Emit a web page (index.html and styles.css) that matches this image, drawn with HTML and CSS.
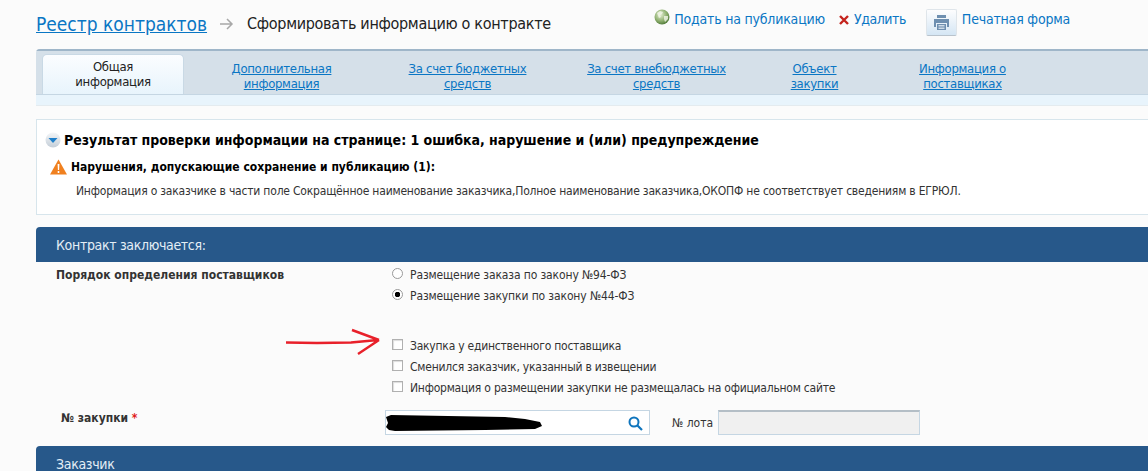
FILE: index.html
```html
<!DOCTYPE html>
<html lang="ru">
<head>
<meta charset="utf-8">
<title>Реестр контрактов</title>
<link rel="stylesheet" href="styles.css">
</head>
<body>
<div class="page">
  <header class="top">
    <div class="crumbs">
      <a class="crumb-link" href="#">Реестр контрактов</a>
      <svg class="crumb-arrow" width="14" height="12" viewBox="0 0 14 12"><path d="M0 6h12M7 1l5 5-5 5" fill="none" stroke="#a8a8a8" stroke-width="1.5"/></svg>
      <span class="crumb-current">Сформировать информацию о контракте</span>
    </div>
    <div class="actions">
      <a class="action action-pub" href="#">
        <svg class="globe" width="16" height="16" viewBox="0 0 16 16"><defs><radialGradient id="g" cx=".4" cy=".35" r=".75"><stop offset="0" stop-color="#e4eed2"/><stop offset=".55" stop-color="#8fb070"/><stop offset="1" stop-color="#3f6b2a"/></radialGradient></defs><circle cx="8" cy="8" r="7.5" fill="url(#g)"/><path d="M3 4l3-2 3 1-1 2-2 1 1 2-2 1zM10 7l4 0 0 3-3 3-1-3z" fill="#f2f6e8" opacity=".8"/></svg>
        Подать на публикацию</a>
      <a class="action action-del" href="#">
        <svg width="10" height="10" viewBox="0 0 10 10"><path d="M1 1l8 8M9 1l-8 8" stroke="#c4231c" stroke-width="2.4"/></svg>
        Удалить</a>
      <a class="action action-print" href="#">
        <span class="print-btn">
          <svg width="17" height="17" viewBox="0 0 17 17"><path d="M4 1h9v3H4z" fill="#6e8fb0"/><path d="M1 5h15v8h-2V9H3v4H1z" fill="#6e8fb0"/><path d="M4 10h9v6H4z" fill="#6e8fb0"/><path d="M5.500 11.500h6M5.500 13h6M5.500 14.500h6" stroke="#e6eef5" stroke-width=".8"/></svg>
        </span>
        Печатная форма</a>
    </div>
  </header>

  <nav class="tabs">
    <div class="tab-row">
      <div class="tab tab-active">Общая<br>информация</div>
      <a class="tab tab-2" href="#">Дополнительная<br>информация</a>
      <a class="tab tab-3" href="#">За счет бюджетных<br>средств</a>
      <a class="tab tab-4" href="#">За счет внебюджетных<br>средств</a>
      <a class="tab tab-5" href="#">Объект<br>закупки</a>
      <a class="tab tab-6" href="#">Информация о<br>поставщиках</a>
    </div>
    <div class="tab-strip"></div>
  </nav>

  <section class="check">
    <h2 class="check-title">
      <svg width="16" height="16" viewBox="0 0 16 16"><defs><linearGradient id="b" x1="0" y1="0" x2="0" y2="1"><stop offset="0" stop-color="#f4f6f8"/><stop offset="1" stop-color="#c4ced8"/></linearGradient></defs><circle cx="8" cy="8" r="7.500" fill="url(#b)"/><path d="M3.500 6h9L8 11z" fill="#1f7fc9"/></svg>
      Результат проверки информации на странице: 1 ошибка, нарушение и (или) предупреждение
    </h2>
    <h3 class="check-sub">
      <svg width="17" height="16" viewBox="0 0 17 16"><path d="M8.500 0.500L17 15.500H0z" fill="#f0801f"/><path d="M7.600 5h1.800l-.3 6H7.900zM7.700 12h1.600v2H7.700z" fill="#fff"/></svg>
      Нарушения, допускающие сохранение и публикацию (1):
    </h3>
    <p class="check-text">Информация о заказчике в части поле Сокращённое наименование заказчика,Полное наименование заказчика,ОКОПФ не соответствует сведениям в ЕГРЮЛ.</p>
  </section>

  <h2 class="section-head">Контракт заключается:</h2>

  <div class="form">
    <svg class="red-arrow" width="96" height="28" viewBox="0 0 96 28"><path d="M1 14.500L32 15l34-.5L93 12M67 2l27 10M73 26l21-14" fill="none" stroke="#e8202a" stroke-width="2.400"/></svg>
    <div class="form-row">
      <div class="field-label">Порядок определения поставщиков</div>
      <div class="options">
        <label class="opt"><span class="radio"></span>Размещение заказа по закону №94-ФЗ</label>
        <label class="opt"><span class="radio radio-on"></span>Размещение закупки по закону №44-ФЗ</label>
      </div>
    </div>
    <div class="checks">
      <label class="opt"><span class="box"></span>Закупка у единственного поставщика</label>
      <label class="opt"><span class="box"></span>Сменился заказчик, указанный в извещении</label>
      <label class="opt"><span class="box"></span>Информация о размещении закупки не размещалась на официальном сайте</label>
    </div>
    <div class="number-row">
      <div class="number-label">№ закупки <span class="req">*</span></div>
      <div class="search">
        <svg class="blot" width="158" height="18" viewBox="0 0 158 18"><path d="M1 3L6 1 120 3 140 5 155 8 157 12 150 15 100 16 10 17 4 16 1 13 3 9z" fill="#000"/></svg>
        <svg class="loupe" width="15" height="15" viewBox="0 0 15 15"><circle cx="6" cy="6" r="4.500" fill="none" stroke="#0f75bd" stroke-width="2"/><path d="M9.500 9.500L14 14" stroke="#0f75bd" stroke-width="2.200"/></svg>
      </div>
      <span class="lot-label">№ лота</span>
      <div class="lot-input"></div>
    </div>
  </div>

  <h2 class="section-head section-head-last">Заказчик</h2>
</div>
</body>
</html>
```
FILE: styles.css
```css
html, body {
  margin: 0;
  height: 471px;
  overflow: hidden;
  background: #fbfbfb;
}
body {
  font-family: "DejaVu Sans", sans-serif;
  font-stretch: condensed;
  color: #333;
}
a { color: #0a76c4; }
.page { margin-left: 36px; }

.top {
  display: flex;
  justify-content: space-between;
  height: 49px;
}
.crumbs { display: flex; align-items: center; height: 47px; }
.crumb-link { font-size: 19px; line-height: 24px; }
.crumb-arrow { margin: 0 13px; }
.crumb-current { font-size: 16px; letter-spacing: -.3px; color: #222; }
.actions {
  display: flex;
  align-items: flex-start;
  margin-right: 78px;
  padding-top: 9px;
  font-size: 14px;
  letter-spacing: -.2px;
}
.action { display: flex; align-items: flex-start; text-decoration: none; line-height: 20px; }
.action-pub .globe { margin-right: 4px; }
.action-del { margin-left: 14px; letter-spacing: -.45px; }
.action-del svg { margin: 6px 5px 0 0; }
.action-print { margin-left: 20px; }
.print-btn {
  display: flex;
  align-items: center;
  justify-content: center;
  width: 31px;
  height: 27px;
  margin-right: 5px;
  border: 1px solid #dfe5ea;
  border-bottom-color: #b9c3cc;
  border-radius: 2px;
  background: linear-gradient(#fdfdfe, #d5e6f4);
  box-sizing: border-box;
}

.tabs { border-radius: 4px 0 0 0; overflow: hidden; }
.tab-row {
  display: flex;
  height: 46px;
  box-sizing: border-box;
  padding: 5px 0 0 6px;
  background: #d5e0e9;
  border-top: 2px solid #9fb6c9;
  border-bottom: 1px solid #c5d6e3;
}
.tab {
  font-size: 13px;
  letter-spacing: -.3px;
  line-height: 15px;
  text-align: center;
  padding-top: 5px;
  flex: none;
}
.tab-active {
  width: 142px;
  box-sizing: border-box;
  background: linear-gradient(#fbfdff, #e8f4fc);
  border: 1px solid #c9d9e5;
  border-bottom: 0;
  border-radius: 5px 5px 0 0;
  color: #222;
  margin-top: -2px;
  padding-top: 4px;
}
.tab-2 { width: 195px; }
.tab-3 { width: 177px; }
.tab-4 { width: 201px; }
.tab-5 { width: 115px; }
.tab-6 { width: 181px; }
.tab-strip {
  height: 10px;
  background: #e8f4fc;
  border-bottom: 1px solid #e4ebef;
}

.check {
  margin-top: 13px;
  height: 96px;
  box-sizing: border-box;
  background: #fff;
  border: 1px solid #d7e5ec;
  border-right: 0;
  padding-top: 11px;
}
.check-title {
  display: flex;
  align-items: center;
  gap: 3px;
  margin: 0 0 0 8px;
  font-size: 14px;
  letter-spacing: -.04px;
  line-height: 18px;
  color: #000;
}
.check-sub {
  display: flex;
  align-items: center;
  gap: 4px;
  margin: 9px 0 0 13px;
  font-size: 12px;
  line-height: 18px;
  color: #000;
}
.check-text {
  margin: 7px 0 0 39px;
  font-size: 12px;
  letter-spacing: -.2px;
  line-height: 16px;
  color: #333;
}

.section-head {
  margin: 12px 0 0;
  height: 35px;
  box-sizing: border-box;
  padding: 9px 0 0 20px;
  font-size: 14px;
  letter-spacing: -.33px;
  line-height: 18px;
  font-weight: normal;
  color: #e4eef6;
  background: #27588a;
  border-radius: 4px 0 0 0;
}
.section-head-last { margin-top: 0; height: 25px; }

.form { position: relative; height: 184px; box-sizing: border-box; padding-top: 5px; }
.red-arrow { position: absolute; left: 249px; top: 66px; }
.form-row { display: flex; }
.field-label {
  width: 337px;
  padding-left: 20px;
  box-sizing: border-box;
  font-size: 12px;
  font-weight: bold;
  line-height: 16px;
}
.options { display: flex; flex-direction: column; gap: 5px; padding-left: 20px; letter-spacing: -.12px; }
.opt {
  display: flex;
  align-items: center;
  font-size: 12px;
  line-height: 16px;
  color: #333;
  height: 16px;
}
.radio, .box {
  flex: none;
  width: 11px;
  height: 11px;
  margin-right: 7px;
  margin-left: -1px;
  box-sizing: border-box;
  background: #fff;
  margin-top: -3px;
}
.radio {
  border-radius: 50%;
  border: 1px solid #9a9a9a;
}
.radio-on { background: radial-gradient(circle, #000 0 2.500px, #fff 3px); }
.box { border: 1px solid #b0b0b0; box-shadow: inset 1px 1px 1px #ddd; }
.checks {
  display: flex;
  flex-direction: column;
  gap: 5px;
  margin: 34px 0 0 357px;
  letter-spacing: -.23px;
}
.number-row { display: flex; align-items: flex-start; margin-top: 14px; }
.number-label {
  width: 349px;
  padding: 0 0 0 25px;
  box-sizing: border-box;
  font-size: 12px;
  font-weight: bold;
  line-height: 16px;
}
.req { color: #e01b1b; }
.search {
  position: relative;
  width: 265px;
  height: 25px;
  box-sizing: border-box;
  background: #fff;
  border: 1px solid #c5d6e3;
}
.blot { position: absolute; left: -1px; top: 3px; }
.loupe { position: absolute; right: 6px; top: 5px; }
.lot-label {
  margin: 5px 3px 0 22px;
  width: 43px;
  font-size: 12px;
  line-height: 16px;
}
.lot-input {
  width: 202px;
  height: 25px;
  box-sizing: border-box;
  background: #f0f0f0;
  border: 1px solid #c5d6e3;
  border-top: 2px solid #b4bec6;
}
```
